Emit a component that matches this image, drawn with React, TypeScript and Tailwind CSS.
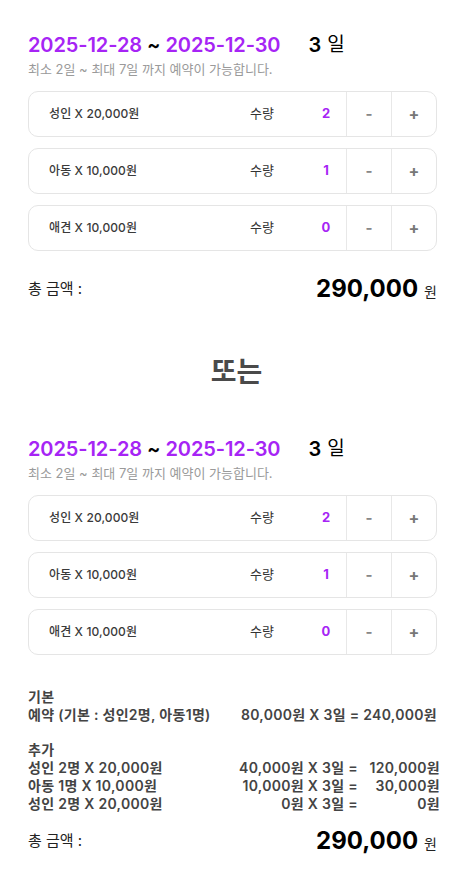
import React from "react";

const PURPLE = "text-[#a624f5]";
const FONT = { fontFamily: '"Inter", "Noto Sans CJK KR", sans-serif' };

type Item = { label: string; count: number };

const items: Item[] = [
  { label: "성인 X 20,000원", count: 2 },
  { label: "아동 X 10,000원", count: 1 },
  { label: "애견 X 10,000원", count: 0 },
];

function DateHeader() {
  return (
    <div>
      <div className="flex items-center h-[28px] leading-[28px]">
        <span className={`text-[20px] font-semibold ${PURPLE} tracking-[-0.1px]`}>2025-12-28</span>
        <span className="text-[20px] font-semibold text-black mx-[5px]">~</span>
        <span className={`text-[20px] font-semibold ${PURPLE} tracking-[-0.1px]`}>2025-12-30</span>
        <span className="ml-[28px] text-[20px] font-semibold text-black">3</span>
        <span className="ml-[6px] text-[19px] text-black">일</span>
      </div>
      <p className="text-[13px] leading-[18px] text-[#9a9a9a] mt-[1px]">
        최소 2일 ~ 최대 7일 까지 예약이 가능합니다.
      </p>
    </div>
  );
}

function CounterRow({ item }: { item: Item }) {
  return (
    <div className="flex items-stretch h-[46px] border border-[#e5e5e5] rounded-[10px]">
      <div className="flex-1 flex items-center pl-[20px] text-[12px] font-medium text-[#3a3a3a] tracking-[0.1px]">
        {item.label}
      </div>
      <div className="flex items-center text-[13px] text-[#333] mr-[32px]">수량</div>
      <div className={`w-[40px] flex items-center justify-center text-[13px] font-bold ${PURPLE}`}>
        {item.count}
      </div>
      <button className="w-[45px] border-l border-[#e8e8e8] flex items-center justify-center text-[15px] font-bold text-[#888]">
        -
      </button>
      <button className="w-[45px] border-l border-[#e8e8e8] flex items-center justify-center text-[16px] font-bold text-[#777]">
        +
      </button>
    </div>
  );
}

function Counters() {
  return (
    <div className="flex flex-col gap-[11px] mt-[13px]">
      {items.map((it) => (
        <CounterRow key={it.label} item={it} />
      ))}
    </div>
  );
}

function Total() {
  return (
    <div className="flex items-center justify-between h-[32px]">
      <span className="text-[15px] text-[#222]">총 금액 :</span>
      <span className="flex items-baseline">
        <span className="text-[24px] font-bold text-black">290,000</span>
        <span className="ml-[6px] text-[14px] text-[#222]">원</span>
      </span>
    </div>
  );
}

const extras = [
  ["성인 2명 X 20,000원", "40,000원 X 3일 =", "120,000원"],
  ["아동 1명 X 10,000원", "10,000원 X 3일 =", "30,000원"],
  ["성인 2명 X 20,000원", "0원 X 3일 =", "0원"],
];

function Breakdown() {
  return (
    <div className="text-[14px] leading-[18px] font-semibold text-[#444] tracking-[0.3px]">
      <div>기본</div>
      <div className="flex justify-between">
        <span>예약 (기본 : 성인2명, 아동1명)</span>
        <span>80,000원 X 3일 = 240,000원</span>
      </div>
      <div className="mt-[17px]">추가</div>
      <div className="grid grid-cols-[1fr_auto_82px] w-[412px]">
        {extras.map((r, i) => (
          <React.Fragment key={i}>
            <span>{r[0]}</span>
            <span className="text-right">{r[1]}</span>
            <span className="text-right">{r[2]}</span>
          </React.Fragment>
        ))}
      </div>
    </div>
  );
}

export default function App() {
  return (
    <div className="w-[471px] min-h-[878px] bg-white" style={FONT}>
      <div className="w-[409px] ml-[28px] pt-[31px] pb-[20px]">
        <DateHeader />
        <Counters />
        <div className="mt-[22px]">
          <Total />
        </div>
        <div className="mt-[49px] pl-[8px] text-center text-[28px] leading-[36px] font-bold text-[#4a4a4a]">
          또는
        </div>
        <div className="mt-[45px]">
          <DateHeader />
          <Counters />
        </div>
        <div className="mt-[33px]">
          <Breakdown />
        </div>
        <div className="mt-[12px]">
          <Total />
        </div>
      </div>
    </div>
  );
}
